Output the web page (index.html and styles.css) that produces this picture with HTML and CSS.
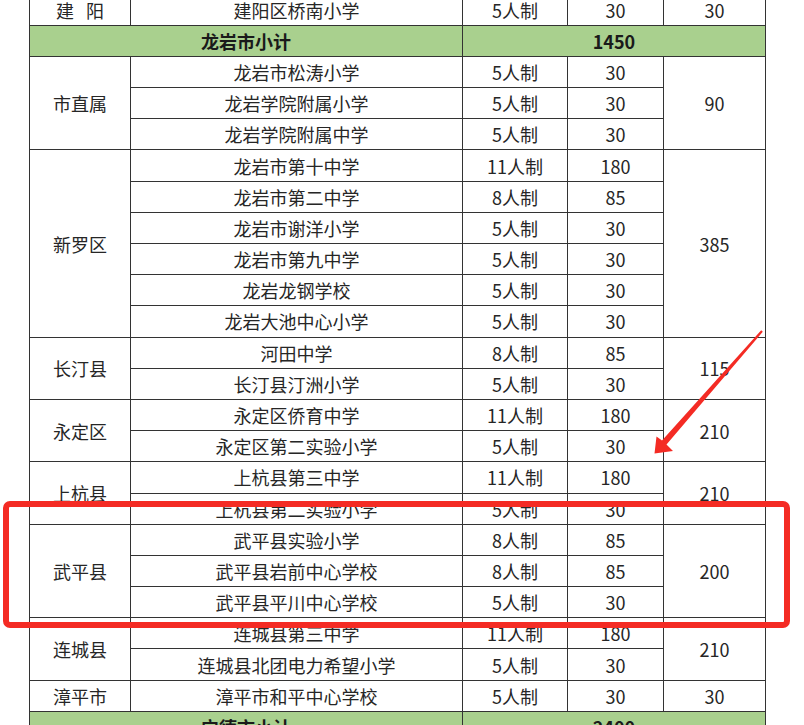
FILE: index.html
```html
<!DOCTYPE html>
<html lang="zh-CN">
<head>
<meta charset="utf-8">
<title>足球学校名额分配</title>
<link rel="stylesheet" href="styles.css">
</head>
<body>
<div class="page">
<table class="quota">
  <colgroup>
    <col class="c-area"><col class="c-school"><col class="c-type"><col class="c-num"><col class="c-total">
  </colgroup>
  <tbody>
    <tr><td class="area">建<span class="gap"></span>阳</td><td>建阳区桥南小学</td><td>5人制</td><td>30</td><td>30</td></tr>
    <tr class="sub"><td colspan="2">龙岩市小计</td><td colspan="3">1450</td></tr>
    <tr><td rowspan="3">市直属</td><td>龙岩市松涛小学</td><td>5人制</td><td>30</td><td rowspan="3">90</td></tr>
    <tr><td>龙岩学院附属小学</td><td>5人制</td><td>30</td></tr>
    <tr><td>龙岩学院附属中学</td><td>5人制</td><td>30</td></tr>
    <tr><td rowspan="6">新罗区</td><td>龙岩市第十中学</td><td>11人制</td><td>180</td><td rowspan="6">385</td></tr>
    <tr><td>龙岩市第二中学</td><td>8人制</td><td>85</td></tr>
    <tr><td>龙岩市谢洋小学</td><td>5人制</td><td>30</td></tr>
    <tr><td>龙岩市第九中学</td><td>5人制</td><td>30</td></tr>
    <tr><td>龙岩龙钢学校</td><td>5人制</td><td>30</td></tr>
    <tr><td>龙岩大池中心小学</td><td>5人制</td><td>30</td></tr>
    <tr><td rowspan="2">长汀县</td><td>河田中学</td><td>8人制</td><td>85</td><td rowspan="2">115</td></tr>
    <tr><td>长汀县汀洲小学</td><td>5人制</td><td>30</td></tr>
    <tr><td rowspan="2">永定区</td><td>永定区侨育中学</td><td>11人制</td><td>180</td><td rowspan="2">210</td></tr>
    <tr><td>永定区第二实验小学</td><td>5人制</td><td>30</td></tr>
    <tr><td rowspan="2">上杭县</td><td>上杭县第三中学</td><td>11人制</td><td>180</td><td rowspan="2">210</td></tr>
    <tr><td>上杭县第二实验小学</td><td>5人制</td><td>30</td></tr>
    <tr><td rowspan="3">武平县</td><td>武平县实验小学</td><td>8人制</td><td>85</td><td rowspan="3">200</td></tr>
    <tr><td>武平县岩前中心学校</td><td>8人制</td><td>85</td></tr>
    <tr><td>武平县平川中心学校</td><td>5人制</td><td>30</td></tr>
    <tr><td rowspan="2">连城县</td><td>连城县第三中学</td><td>11人制</td><td>180</td><td rowspan="2">210</td></tr>
    <tr><td>连城县北团电力希望小学</td><td>5人制</td><td>30</td></tr>
    <tr><td>漳平市</td><td>漳平市和平中心学校</td><td>5人制</td><td>30</td><td>30</td></tr>
    <tr class="sub"><td colspan="2">宁德市小计</td><td colspan="3">2400</td></tr>
  </tbody>
</table>
<div class="highlight"></div>
<svg class="arrow" width="804" height="725" viewBox="0 0 804 725" aria-hidden="true">
  <polygon points="761.2,336.3 662,446.5 656.5,442.5 654.5,459.5 673,457 666.5,450.5 762.8,337.7" fill="#f42b24"/>
</svg>
</div>
</body>
</html>
```
FILE: styles.css
```css
html, body {
  margin: 0;
  padding: 0;
  background: #ffffff;
}
body {
  width: 804px;
  height: 725px;
  overflow: hidden;
  font-family: "Noto Sans CJK SC", "Noto Sans", sans-serif;
  color: #262626;
}
.page {
  position: relative;
  width: 804px;
  height: 725px;
}
.quota {
  margin: -6.5px 0 0 29px;
  border-collapse: separate;
  border-spacing: 0;
  table-layout: fixed;
  width: 737px;
  border-top: 1px solid #333333;
  border-left: 1px solid #333333;
}
.c-area { width: 101px; }
.c-school { width: 332px; }
.c-type { width: 105px; }
.c-num { width: 96px; }
.c-total { width: 102px; }
.quota tr {
  height: 31.2px;
}
.quota td {
  box-sizing: border-box;
  padding: 0;
  border-right: 1px solid #333333;
  border-bottom: 1px solid #333333;
  text-align: center;
  vertical-align: middle;
  font-size: 18px;
  line-height: 1;
  white-space: nowrap;
  background: #ffffff;
}
.quota .sub td {
  background: #a9d08e;
  font-weight: 700;
  color: #1a1a1a;
}
.gap {
  display: inline-block;
  width: 12px;
}
.highlight {
  position: absolute;
  left: 3px;
  top: 507px;
  width: 787px;
  height: 127px;
  box-sizing: border-box;
  border: 6px solid #f42b24;
  border-radius: 7px;
}
.arrow {
  position: absolute;
  left: 0;
  top: 0;
}
```
